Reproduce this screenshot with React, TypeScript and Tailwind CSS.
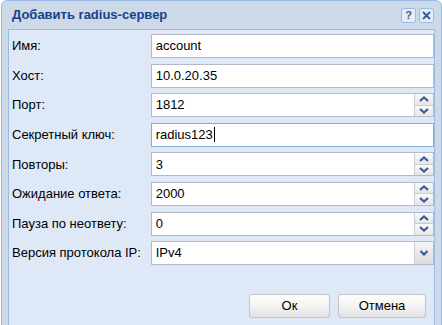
import React from "react";

const rows: { label: string; value: string; kind: "text" | "spin" | "focus" | "select" }[] = [
  { label: "Имя:", value: "account", kind: "text" },
  { label: "Хост:", value: "10.0.20.35", kind: "text" },
  { label: "Порт:", value: "1812", kind: "spin" },
  { label: "Секретный ключ:", value: "radius123", kind: "focus" },
  { label: "Повторы:", value: "3", kind: "spin" },
  { label: "Ожидание ответа:", value: "2000", kind: "spin" },
  { label: "Пауза по неответу:", value: "0", kind: "spin" },
  { label: "Версия протокола IP:", value: "IPv4", kind: "select" },
];

function Chevron({ up }: { up?: boolean }) {
  return (
    <svg width="10" height="6" viewBox="0 0 10 6">
      <path
        d={up ? "M1 5 L5 1.5 L9 5" : "M1 1 L5 4.5 L9 1"}
        fill="none"
        stroke="#3b5b94"
        strokeWidth="2.2"
      />
    </svg>
  );
}

function Field({ value, kind }: { value: string; kind: string }) {
  const border = kind === "focus" ? "border-[#7eadd9]" : "border-[#b5b8c8]";
  return (
    <div className={`flex h-[24px] w-[284px] border bg-white ${border}`}>
      <div className="flex flex-1 items-center px-[4px] text-[13px] text-black">
        {value}
        {kind === "focus" && <span className="ml-[1px] h-[15px] w-px bg-black" />}
      </div>
      {kind === "spin" && (
        <div className="flex w-[19px] flex-col border-l border-[#c9ccd6]">
          <div className="flex flex-1 items-center justify-center border-b border-[#c9ccd6] bg-gradient-to-b from-[#fafafa] to-[#e6e6e6]">
            <Chevron up />
          </div>
          <div className="flex flex-1 items-center justify-center bg-gradient-to-b from-[#fafafa] to-[#e6e6e6]">
            <Chevron />
          </div>
        </div>
      )}
      {kind === "select" && (
        <div className="flex w-[19px] items-center justify-center border-l border-[#c9ccd6] bg-gradient-to-b from-[#f6f6f6] to-[#dcdcdc]">
          <svg width="10" height="6" viewBox="0 0 10 6">
            <path d="M1.5 1 L5 4.5 L8.5 1" fill="none" stroke="#3b5b94" strokeWidth="2.2" />
          </svg>
        </div>
      )}
    </div>
  );
}

export default function App() {
  return (
    <div className="h-[325px] w-[442px] overflow-hidden bg-white font-['Liberation_Sans',Arial,sans-serif]">
      <div className="ml-px flex h-[340px] w-[441px] flex-col rounded-tl-[6px] rounded-tr-[6px] border border-[#99bbe8] bg-[#cdd9e7] px-[6px]">
        {/* Title bar */}
        <div className="flex h-[28px] shrink-0 items-center justify-between pl-[4px] pr-[1px]">
          <span className="text-[13px] font-bold text-[#15428b]">Добавить radius-сервер</span>
          <div className="flex gap-[3px] pt-[1px]">
            <div className="flex h-[15px] w-[15px] items-center justify-center rounded-[2px] border border-[#99bbe8] bg-[#e4ecf7] text-[11px] font-bold leading-none text-[#3b5b94]">
              ?
            </div>
            <div className="flex h-[15px] w-[15px] items-center justify-center rounded-[2px] border border-[#99bbe8] bg-[#e4ecf7]">
              <svg width="9" height="9" viewBox="0 0 9 9">
                <path d="M1 1 L8 8 M8 1 L1 8" stroke="#3b5b94" strokeWidth="1.8" />
              </svg>
            </div>
          </div>
        </div>

        {/* Body */}
        <div className="flex flex-1 flex-col border border-[#99bbe8] bg-[#dfe8f6] pl-[3px] pt-[4px]">
          <div className="flex flex-col gap-[5.6px]">
            {rows.map((r) => (
              <div key={r.label} className="flex items-center">
                <span className="w-[139px] text-[13px] text-black">{r.label}</span>
                <Field value={r.value} kind={r.kind} />
              </div>
            ))}
          </div>

          <div className="mt-[29px] flex gap-[8px] pl-[237px]">
            <button className="h-[24px] w-[81px] rounded-[3px] border border-[#c4c4c4] bg-gradient-to-b from-[#fdfdfd] via-[#f3f3f3] to-[#e2e2e2] text-[13px] text-black">
              Ок
            </button>
            <button className="h-[24px] w-[88px] rounded-[3px] border border-[#c4c4c4] bg-gradient-to-b from-[#fdfdfd] via-[#f3f3f3] to-[#e2e2e2] text-[13px] text-black">
              Отмена
            </button>
          </div>
        </div>
      </div>
    </div>
  );
}
